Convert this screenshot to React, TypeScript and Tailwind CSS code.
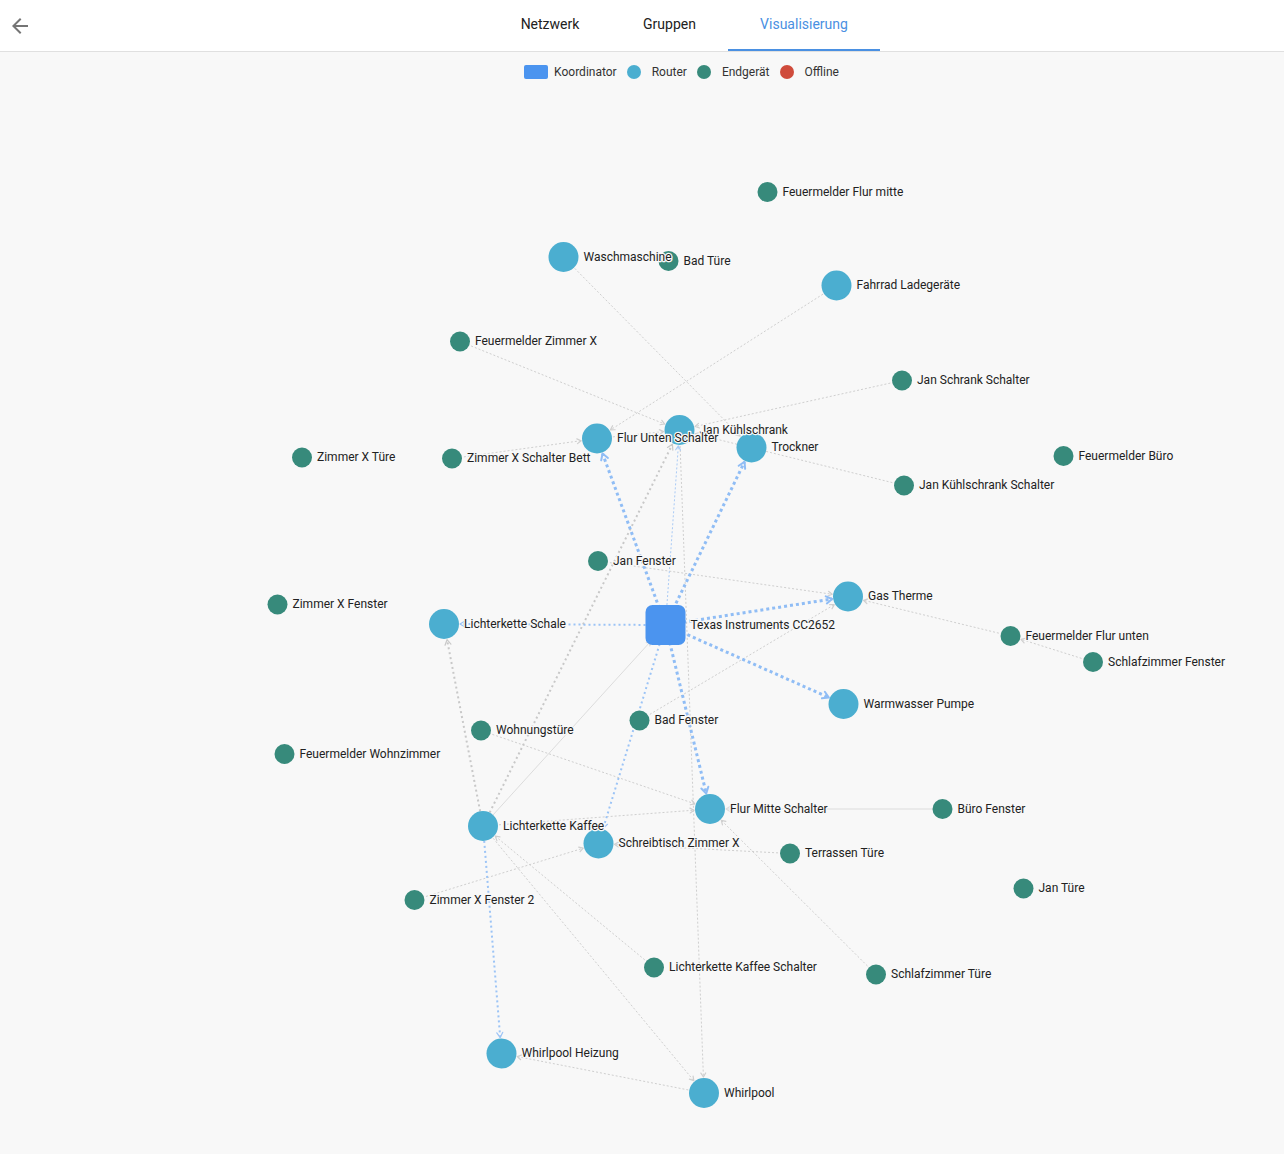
import React from 'react';

type NodeType = 'coordinator' | 'router' | 'end';

interface GraphNode {
  id: string;
  label: string;
  type: NodeType;
  x: number;
  y: number;
}

type EdgeKind = 'b3' | 'b2' | 'b1' | 'g2' | 'g1' | 'gs';

const nodes: GraphNode[] = [
  { id: 'coord', label: 'Texas Instruments CC2652', type: 'coordinator', x: 665.5, y: 625 },
  { id: 'fmFlurMitte', label: 'Feuermelder Flur mitte', type: 'end', x: 767.5, y: 192 },
  { id: 'wasch', label: 'Waschmaschine', type: 'router', x: 563.5, y: 257 },
  { id: 'badTuere', label: 'Bad Türe', type: 'end', x: 668.5, y: 261 },
  { id: 'fahrrad', label: 'Fahrrad Ladegeräte', type: 'router', x: 836.5, y: 285.5 },
  { id: 'fmZimmerX', label: 'Feuermelder Zimmer X', type: 'end', x: 460, y: 341.5 },
  { id: 'janSchrank', label: 'Jan Schrank Schalter', type: 'end', x: 902, y: 380.5 },
  { id: 'kuehl', label: 'Jan Kühlschrank', type: 'router', x: 679.5, y: 430 },
  { id: 'flurUnten', label: 'Flur Unten Schalter', type: 'router', x: 597, y: 438.5 },
  { id: 'trockner', label: 'Trockner', type: 'router', x: 751.5, y: 447.5 },
  { id: 'zxTuere', label: 'Zimmer X Türe', type: 'end', x: 302, y: 457.5 },
  { id: 'zxBett', label: 'Zimmer X Schalter Bett', type: 'end', x: 452, y: 458.5 },
  { id: 'fmBuero', label: 'Feuermelder Büro', type: 'end', x: 1063.5, y: 456 },
  { id: 'kuehlSchalter', label: 'Jan Kühlschrank Schalter', type: 'end', x: 904, y: 485.5 },
  { id: 'janFenster', label: 'Jan Fenster', type: 'end', x: 598, y: 561 },
  { id: 'gas', label: 'Gas Therme', type: 'router', x: 848, y: 596.5 },
  { id: 'zxFenster', label: 'Zimmer X Fenster', type: 'end', x: 277.5, y: 604.5 },
  { id: 'schale', label: 'Lichterkette Schale', type: 'router', x: 444, y: 624 },
  { id: 'fmFlurUnten', label: 'Feuermelder Flur unten', type: 'end', x: 1010.5, y: 636 },
  { id: 'szFenster', label: 'Schlafzimmer Fenster', type: 'end', x: 1093, y: 662 },
  { id: 'warm', label: 'Warmwasser Pumpe', type: 'router', x: 843.5, y: 704 },
  { id: 'badFenster', label: 'Bad Fenster', type: 'end', x: 639.5, y: 720.5 },
  { id: 'wohnung', label: 'Wohnungstüre', type: 'end', x: 481, y: 730.5 },
  { id: 'fmWohn', label: 'Feuermelder Wohnzimmer', type: 'end', x: 284.5, y: 754 },
  { id: 'flurMitte', label: 'Flur Mitte Schalter', type: 'router', x: 710, y: 809 },
  { id: 'bueroFenster', label: 'Büro Fenster', type: 'end', x: 942.5, y: 809 },
  { id: 'kaffee', label: 'Lichterkette Kaffee', type: 'router', x: 483, y: 826 },
  { id: 'schreib', label: 'Schreibtisch Zimmer X', type: 'router', x: 598.5, y: 843.5 },
  { id: 'terrasse', label: 'Terrassen Türe', type: 'end', x: 790, y: 853.5 },
  { id: 'janTuere', label: 'Jan Türe', type: 'end', x: 1023.5, y: 888.5 },
  { id: 'zxFenster2', label: 'Zimmer X Fenster 2', type: 'end', x: 414.5, y: 900 },
  { id: 'kaffeeSchalter', label: 'Lichterkette Kaffee Schalter', type: 'end', x: 654, y: 967.5 },
  { id: 'szTuere', label: 'Schlafzimmer Türe', type: 'end', x: 876, y: 974.5 },
  { id: 'heizung', label: 'Whirlpool Heizung', type: 'router', x: 501.5, y: 1053.5 },
  { id: 'whirl', label: 'Whirlpool', type: 'router', x: 704, y: 1093 },
];

// [from, to, kind] - arrow is drawn at the "to" end
const edges: [string, string, EdgeKind][] = [
  ['wasch', 'trockner', 'g1'],
  ['fahrrad', 'flurUnten', 'g1'],
  ['fmZimmerX', 'kuehl', 'g1'],
  ['janSchrank', 'kuehl', 'g1'],
  ['zxBett', 'flurUnten', 'g1'],
  ['flurUnten', 'kuehl', 'g1'],
  ['kuehlSchalter', 'kuehl', 'g1'],
  ['janFenster', 'gas', 'g1'],
  ['badFenster', 'gas', 'g1'],
  ['fmFlurUnten', 'gas', 'g1'],
  ['szFenster', 'fmFlurUnten', 'g1'],
  ['wohnung', 'flurMitte', 'g1'],
  ['kaffee', 'flurMitte', 'g1'],
  ['kaffee', 'coord', 'gs'],
  ['zxFenster2', 'schreib', 'g1'],
  ['terrasse', 'schreib', 'g1'],
  ['bueroFenster', 'flurMitte', 'gs'],
  ['szTuere', 'flurMitte', 'g1'],
  ['kaffeeSchalter', 'kaffee', 'g1'],
  ['kaffee', 'whirl', 'g1'],
  ['kuehl', 'whirl', 'g1'],
  ['whirl', 'heizung', 'g1'],
  ['kaffee', 'schale', 'g2'],
  ['kaffee', 'kuehl', 'g2'],
  ['coord', 'kuehl', 'b1'],
  ['coord', 'schale', 'b2'],
  ['coord', 'schreib', 'b2'],
  ['kaffee', 'heizung', 'b2'],
  ['coord', 'flurUnten', 'b3'],
  ['coord', 'trockner', 'b3'],
  ['coord', 'gas', 'b3'],
  ['coord', 'warm', 'b3'],
  ['coord', 'flurMitte', 'b3'],
];

const edgeStyles: Record<EdgeKind, { stroke: string; width: number; dash?: string; head: number }> = {
  b3: { stroke: '#90bdf5', width: 3, dash: '3 3', head: 6 },
  b2: { stroke: '#9cc4f6', width: 2, dash: '2 3', head: 5 },
  b1: { stroke: '#aacbf6', width: 1, dash: '2 2', head: 4 },
  g2: { stroke: '#c8c8c8', width: 2, dash: '2 3', head: 5 },
  g1: { stroke: '#cfcfcf', width: 1, dash: '2 2', head: 4 },
  gs: { stroke: '#dcdcdc', width: 1, head: 4 },
};

const radius = (t: NodeType) => (t === 'coordinator' ? 21 : t === 'router' ? 15 : 10);

const colors = {
  coordinator: '#4b94ef',
  router: '#4baed0',
  end: '#378a7b',
  offline: '#cf4b3b',
};

const byId = Object.fromEntries(nodes.map((n) => [n.id, n]));

const Edge: React.FC<{ from: GraphNode; to: GraphNode; kind: EdgeKind }> = ({ from, to, kind }) => {
  const s = edgeStyles[kind];
  const dx = to.x - from.x;
  const dy = to.y - from.y;
  const len = Math.sqrt(dx * dx + dy * dy);
  const ux = dx / len;
  const uy = dy / len;
  const r = radius(to.type) + 1;
  const px = to.x - ux * r;
  const py = to.y - uy * r;
  const h = s.head;
  const w = h * 0.6;
  const ax = px - ux * h;
  const ay = py - uy * h;
  return (
    <g>
      <line
        x1={from.x}
        y1={from.y}
        x2={px}
        y2={py}
        stroke={s.stroke}
        strokeWidth={s.width}
        strokeDasharray={s.dash}
      />
      <polyline
        points={`${ax - uy * w},${ay + ux * w} ${px},${py} ${ax + uy * w},${ay - ux * w}`}
        fill="none"
        stroke={s.stroke}
        strokeWidth={kind === 'b3' ? 2 : 1.2}
        strokeLinejoin="round"
        strokeLinecap="round"
      />
    </g>
  );
};

const Graph: React.FC = () => (
  <svg className="absolute inset-0" width={1284} height={1102} viewBox="0 52 1284 1102">
    {edges.map(([a, b, k], i) => (
      <Edge key={i} from={byId[a]} to={byId[b]} kind={k} />
    ))}
    {nodes.map((n) =>
      n.type === 'coordinator' ? (
        <rect key={n.id} x={n.x - 20} y={n.y - 20} width={40} height={40} rx={7} fill={colors.coordinator} />
      ) : (
        <circle key={n.id} cx={n.x} cy={n.y} r={radius(n.type)} fill={colors[n.type]} />
      )
    )}
    {nodes.map((n) => (
      <text
        key={n.id}
        x={n.x + (n.type === 'coordinator' ? 25 : radius(n.type) + 5)}
        y={n.y - 0.5}
        fontSize={12}
        fill="#222222"
        dominantBaseline="central"
        stroke="#f8f8f8"
        strokeWidth={2.5}
        strokeLinejoin="round"
        paintOrder="stroke"
      >
        {n.label}
      </text>
    ))}
  </svg>
);

const LegendItem: React.FC<{ label: string; swatch: React.ReactNode }> = ({ label, swatch }) => (
  <div className="flex items-center gap-[6px]">
    <div className="flex w-[24px] items-center justify-center">{swatch}</div>
    <span>{label}</span>
  </div>
);

const App: React.FC = () => {
  return (
    <div className="flex min-h-screen w-full flex-col bg-[#f8f8f8] font-[Roboto,sans-serif]">
      {/* Top bar with tabs */}
      <div className="flex h-[52px] items-stretch border-b border-[#e0e0e0] bg-white">
        <div className="flex w-[489px] items-center pl-[8px]">
          <button className="flex h-[30px] w-[24px] items-center justify-center text-[#757575]">
            <svg width="24" height="24" viewBox="0 0 24 24" fill="currentColor">
              <path d="M20 11H7.83l5.59-5.59L12 4l-8 8 8 8 1.41-1.41L7.83 13H20v-2z" />
            </svg>
          </button>
        </div>
        <div className="flex text-[14px]">
          <div className="flex w-[122px] items-center justify-center pb-[3px] text-[#212121]">Netzwerk</div>
          <div className="flex w-[117px] items-center justify-center pb-[3px] text-[#212121]">Gruppen</div>
          <div className="flex w-[152px] items-center justify-center border-b-2 border-[#4a90e2] pb-[1px] text-[#4a90e2]">
            Visualisierung
          </div>
        </div>
      </div>

      {/* Graph canvas */}
      <div className="relative h-[1102px] w-full">
        <div className="relative z-10 flex justify-center pl-[79px] pt-[11px] text-[12px] text-[#333333]">
          <div className="flex items-center gap-[5px]">
            <LegendItem label="Koordinator" swatch={<div className="h-[14px] w-[24px] rounded-[2px] bg-[#4b94ef]" />} />
            <LegendItem label="Router" swatch={<div className="h-[14px] w-[14px] rounded-full bg-[#4baed0]" />} />
            <LegendItem label="Endgerät" swatch={<div className="h-[14px] w-[14px] rounded-full bg-[#378a7b]" />} />
            <LegendItem label="Offline" swatch={<div className="h-[14px] w-[14px] rounded-full bg-[#cf4b3b]" />} />
          </div>
        </div>
        <Graph />
      </div>
    </div>
  );
};

export default App;
